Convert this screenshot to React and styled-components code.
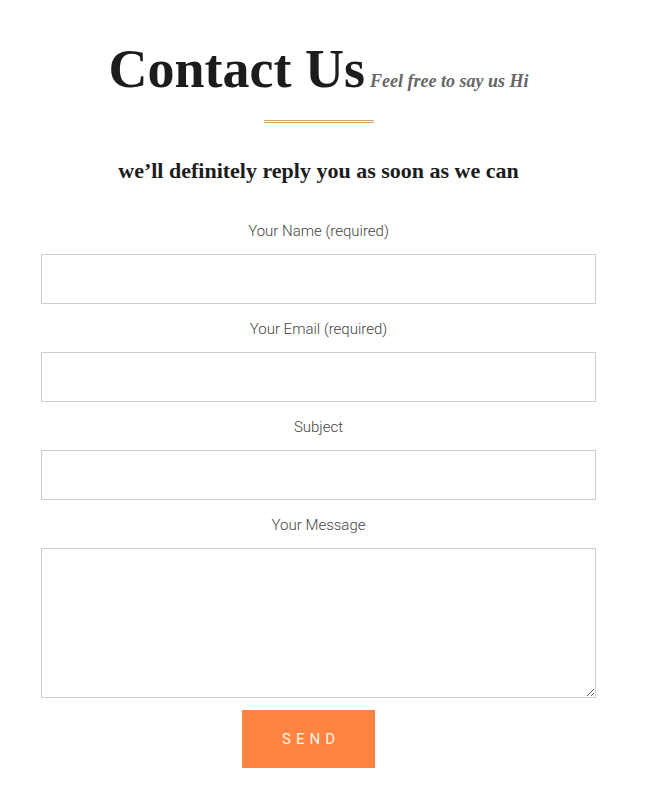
import React from 'react';
import styled, { createGlobalStyle } from 'styled-components';

const GlobalStyle = createGlobalStyle`
  html, body {
    margin: 0;
    padding: 0;
    background: #ffffff;
  }
`;

const Page = styled.div`
  width: 555px;
  padding: 37px 0 0 41px;
  display: flex;
  flex-direction: column;
  align-items: center;
`;

const HeadingRow = styled.div`
  display: flex;
  align-items: baseline;
  justify-content: center;
  gap: 5px;
  height: 64px;
`;

const Title = styled.h1`
  margin: 0;
  font-family: 'Liberation Serif', serif;
  font-weight: 700;
  font-size: 54px;
  line-height: 64px;
  color: #1c1c1c;
`;

const Tagline = styled.span`
  font-family: 'Liberation Serif', serif;
  font-style: italic;
  font-weight: 700;
  font-size: 18px;
  color: #666666;
`;

const DoubleRule = styled.div`
  width: 110px;
  height: 1px;
  margin-top: 19px;
  border-top: 1px solid #d4a46c;
  border-bottom: 1px solid #d4a46c;
`;

const Lead = styled.h2`
  margin: 34px 0 0;
  font-family: 'Liberation Serif', serif;
  font-weight: 700;
  font-size: 22px;
  line-height: 28px;
  color: #1c1c1c;
`;

const Form = styled.form`
  width: 100%;
  margin-top: 34px;
  display: flex;
  flex-direction: column;
`;

const Label = styled.label`
  display: block;
  text-align: center;
  font-family: Roboto, 'Noto Sans', sans-serif;
  font-weight: 300;
  font-size: 15px;
  line-height: 24px;
  color: #444444;
  margin-bottom: 11px;
`;

const Input = styled.input`
  display: block;
  box-sizing: border-box;
  width: 100%;
  height: 50px;
  margin: 0 0 13px;
  border: 1px solid #cccccc;
  outline: none;
  padding: 0 12px;
  font-family: Roboto, sans-serif;
  font-size: 15px;
`;

const TextArea = styled.textarea`
  display: block;
  box-sizing: border-box;
  width: 100%;
  height: 150px;
  margin: 0 0 12px;
  border: 1px solid #cccccc;
  outline: none;
  padding: 12px;
  font-family: Roboto, sans-serif;
  font-size: 15px;
`;

const SendButton = styled.button`
  align-self: flex-start;
  margin-left: 201px;
  width: 133px;
  height: 58px;
  border: none;
  background: #ff8442;
  color: #fff3ea;
  font-family: Roboto, sans-serif;
  font-weight: 400;
  font-size: 15px;
  letter-spacing: 5px;
  padding: 0 0 0 5px;
  cursor: pointer;
`;

const fields = [
  { id: 'name', label: 'Your Name (required)' },
  { id: 'email', label: 'Your Email (required)' },
  { id: 'subject', label: 'Subject' },
];

export default function App() {
  return (
    <>
      <GlobalStyle />
      <Page>
        <HeadingRow>
          <Title>Contact Us</Title>
          <Tagline>Feel free to say us Hi</Tagline>
        </HeadingRow>
        <DoubleRule />
        <Lead>we’ll definitely reply you as soon as we can</Lead>
        <Form onSubmit={(e) => e.preventDefault()}>
          {fields.map((f) => (
            <React.Fragment key={f.id}>
              <Label htmlFor={f.id}>{f.label}</Label>
              <Input id={f.id} type="text" />
            </React.Fragment>
          ))}
          <Label htmlFor="message">Your Message</Label>
          <TextArea id="message" />
          <SendButton type="submit">SEND</SendButton>
        </Form>
      </Page>
    </>
  );
}
